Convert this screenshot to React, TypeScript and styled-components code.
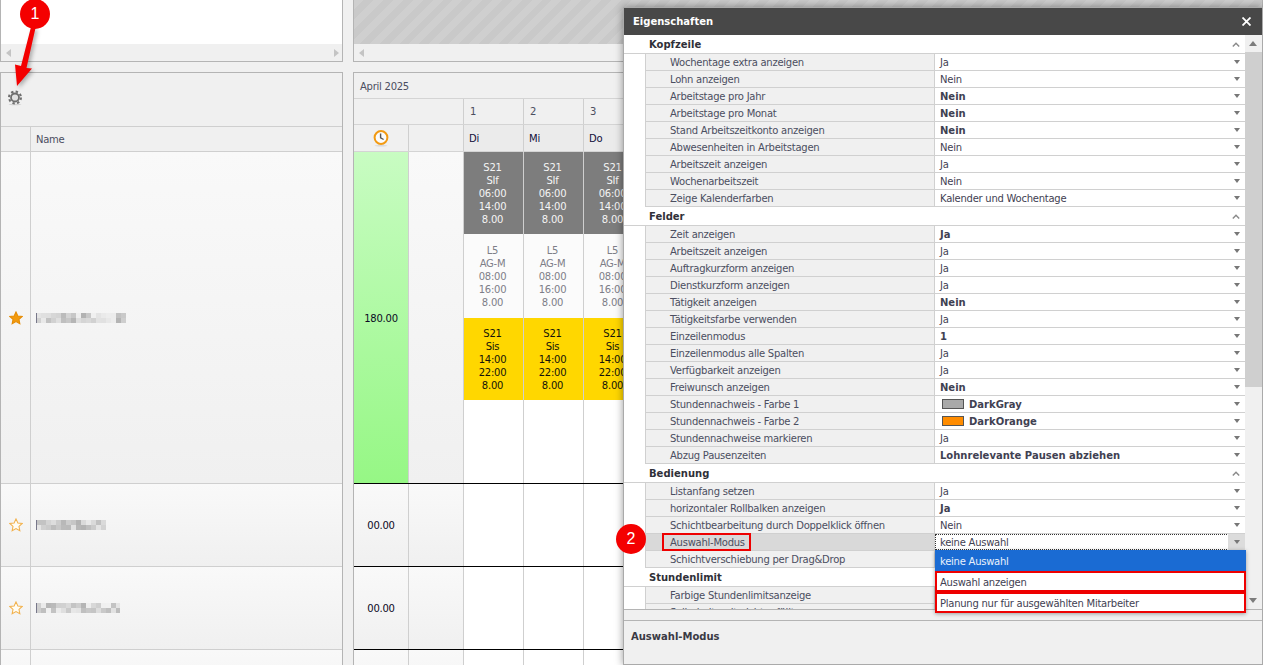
import React from 'react';
import styled, { createGlobalStyle } from 'styled-components';

const Global = createGlobalStyle`
  * {
    box-sizing: border-box;
  }
  html, body {
    margin: 0;
    overflow: hidden;
  }
  body {
    font-family: "DejaVu Sans", "Liberation Sans", sans-serif;
    font-size: 10px;
    letter-spacing: -0.25px;
    color: #4b4e60;
  }
`;

const Page = styled.div`
  position: relative;
  width: 1263px;
  height: 665px;
  overflow: hidden;
  background: #f0f0f0;
  display: grid;
  grid-template-columns: 343px 1fr;
  grid-template-rows: 62px 1fr;
  column-gap: 10px;
  row-gap: 10px;
`;

const TopPanel = styled.div`
  border: 1px solid #b4b4b4;
  border-top: 0;
  display: flex;
  flex-direction: column;
  min-width: 0;
`;

const TopFill = styled.div<{ $hatched?: boolean }>`
  flex: 1;
  background: ${p =>
    p.$hatched
      ? 'repeating-linear-gradient(135deg, #cfcfcf 0 7px, #c9c9c9 7px 14px)'
      : '#fff'};
`;

const HScroll = styled.div`
  height: 17px;
  padding: 0 3px 0 5px;
  display: flex;
  align-items: center;
  justify-content: space-between;
`;

const ScrollArrow = styled.span<{ $right?: boolean }>`
  width: 0;
  height: 0;
  border-top: 4px solid transparent;
  border-bottom: 4px solid transparent;
  ${p =>
    p.$right ? 'border-left: 5px solid #c4c4c4;' : 'border-right: 5px solid #c4c4c4;'}
`;

const GridPanel = styled.div`
  border: 1px solid #b4b4b4;
  border-bottom: 0;
  overflow: hidden;
  min-width: 0;
`;

const ToolHeader = styled.div`
  height: 54px;
  border-bottom: 1px solid #cfcfcf;
  padding: 0 0 3px 6px;
  display: flex;
  align-items: center;
`;

const NameRow = styled.div<{ $h: number; $head?: boolean }>`
  height: ${p => p.$h}px;
  border-bottom: 1px solid #cfcfcf;
  display: flex;
  background: ${p =>
    p.$head ? '#f0f0f0' : 'linear-gradient(#f9f9f9, #f0f0f0)'};
`;

const StarCell = styled.div`
  width: 30px;
  border-right: 1px solid #cfcfcf;
  display: flex;
  align-items: center;
  justify-content: center;
`;

const NameCell = styled.div`
  flex: 1;
  padding-left: 5px;
  display: flex;
  align-items: center;
`;

const TitleRow = styled.div`
  height: 26px;
  border-bottom: 1px solid #d4d4d4;
  padding: 1px 0 0 6px;
  display: flex;
  align-items: center;
`;

const Row = styled.div<{ $h: number; $line?: string }>`
  height: ${p => p.$h}px;
  display: flex;
  width: max-content;
  border-bottom: 1px solid ${p => p.$line ?? '#d4d4d4'};
`;

const Cell = styled.div<{ $w: number; $bg?: string; $center?: boolean }>`
  width: ${p => p.$w}px;
  border-right: 1px solid #cfcfcf;
  background: ${p => p.$bg ?? 'transparent'};
  display: flex;
  align-items: center;
  justify-content: ${p => (p.$center ? 'center' : 'flex-start')};
  padding-left: ${p => (p.$center ? 0 : 6)}px;
`;

const DayName = styled(Cell)`
  color: #10103a;
  padding-left: 5px;
`;

const Hours = styled(Cell)<{ $total?: boolean }>`
  color: #0a0a24;
  padding-top: ${p => (p.$total ? 2 : 0)}px;
`;

const DayColumn = styled.div`
  width: 60px;
  border-right: 1px solid #cfcfcf;
  background: #fff;
  display: flex;
  flex-direction: column;
`;

const Shift = styled.div<{ $h: number; $bg: string; $fg: string }>`
  height: ${p => p.$h}px;
  background: ${p => p.$bg};
  color: ${p => p.$fg};
  padding-right: 2px;
  display: flex;
  flex-direction: column;
  align-items: center;
  justify-content: center;
  line-height: 13px;
`;

const Dialog = styled.div`
  position: absolute;
  left: 623px;
  top: 7px;
  width: 640px;
  height: 658px;
  border: 1px solid #aaa;
  background: #f0f0f0;
  box-shadow: 0 0 8px rgba(0, 0, 0, 0.4);
  display: flex;
  flex-direction: column;
`;

const DialogTitle = styled.div`
  height: 27px;
  flex: none;
  background: #484848;
  color: #fff;
  font-weight: bold;
  letter-spacing: 0;
  padding: 0 11px 0 9px;
  display: flex;
  align-items: center;
  justify-content: space-between;
`;

const CloseIcon = styled.svg`
  width: 9px;
  height: 9px;
  stroke: #fff;
  stroke-width: 1.8;
`;

const DialogBody = styled.div`
  height: 575px;
  flex: none;
  display: flex;
  border-bottom: 1px solid #b4b4b4;
`;

const PropertyList = styled.div`
  flex: 1;
  overflow: hidden;
  background: #fff;
`;

const SectionHead = styled.div`
  height: 19px;
  padding: 0 5px 0 25px;
  border-bottom: 1px solid #d0d0d0;
  display: flex;
  align-items: center;
  justify-content: space-between;
  color: #2f3038;
  font-weight: bold;
  letter-spacing: 0;
`;

const Caret = styled.svg`
  width: 8px;
  height: 5px;
  fill: none;
  stroke: #8a8a8a;
  stroke-width: 1.4;
`;

const PropRow = styled.div`
  height: 17px;
  margin-left: 21px;
  border-left: 1px solid #d0d0d0;
  border-bottom: 1px solid #d0d0d0;
  display: flex;
`;

const PropLabel = styled.div<{ $active?: boolean }>`
  width: 289px;
  padding-left: 24px;
  background: ${p => (p.$active ? '#d9d9d9' : '#f0f0f0')};
  border-right: 1px solid #d0d0d0;
  display: flex;
  align-items: center;
`;

const MarkedText = styled.span<{ $marked?: boolean }>`
  position: relative;
  ${p =>
    p.$marked &&
    `&::after {
      content: '';
      position: absolute;
      left: -8px;
      right: -6px;
      top: -4px;
      bottom: -3px;
      border: 2px solid #ee0000;
    }`}
`;

const PropValue = styled.div<{ $bold?: boolean; $focus?: boolean }>`
  flex: 1;
  position: relative;
  padding-left: 5px;
  display: flex;
  align-items: center;
  gap: 5px;
  font-weight: ${p => (p.$bold ? 'bold' : 'normal')};
  letter-spacing: ${p => (p.$bold ? '0' : '-0.25px')};
  color: #3f4152;
  ${p => p.$focus && 'outline: 1px dotted #333; outline-offset: -1px;'}
`;

const Swatch = styled.span<{ $color: string }>`
  width: 22px;
  height: 10px;
  margin-left: 2px;
  border: 1px solid #555;
  background: ${p => p.$color};
`;

const DropButton = styled.span<{ $active?: boolean }>`
  position: absolute;
  right: 0;
  top: 0;
  bottom: 0;
  width: 17px;
  background: ${p => (p.$active ? '#dcdcdc' : 'transparent')};
  display: flex;
  align-items: center;
  justify-content: center;
  &::before {
    content: '';
    border-left: 3.5px solid transparent;
    border-right: 3.5px solid transparent;
    border-top: 4px solid #777;
  }
`;

const VScroll = styled.div`
  position: relative;
  width: 17px;
  flex: none;
  background: #f0f0f0;
  padding-top: 17px;
`;

const Thumb = styled.div`
  height: 335px;
  background: #cfcfcf;
`;

const VArrow = styled.span<{ $down?: boolean }>`
  position: absolute;
  left: 4px;
  ${p => (p.$down ? 'bottom: 6px;' : 'top: 6px;')}
  border-left: 4px solid transparent;
  border-right: 4px solid transparent;
  ${p =>
    p.$down ? 'border-top: 5px solid #7c7c7c;' : 'border-bottom: 5px solid #7c7c7c;'}
`;

const Strip = styled.div`
  height: 11px;
  flex: none;
  border-bottom: 1px solid #b4b4b4;
`;

const Description = styled.div`
  flex: 1;
  padding: 10px 7px;
  font-weight: bold;
  letter-spacing: 0;
  color: #3a3a44;
`;

const Dropdown = styled.div`
  position: absolute;
  left: 311px;
  top: 542px;
  width: 311px;
  background: #fff;
  box-shadow: 0 1px 4px rgba(0, 0, 0, 0.35);
`;

const Option = styled.div<{ $selected?: boolean; $marked?: boolean }>`
  height: 21px;
  padding: 2px 0 0 5px;
  display: flex;
  align-items: center;
  background: ${p => (p.$selected ? '#1a6bd3' : '#fff')};
  color: ${p => (p.$selected ? '#e9f1fb' : '#3f4152')};
  ${p => p.$marked && 'border: 2px solid #ee0000; padding: 1px 0 0 3px;'}
`;

const Badge = styled.div<{ $x: number; $y: number }>`
  position: absolute;
  left: ${p => p.$x - 15}px;
  top: ${p => p.$y - 15}px;
  width: 30px;
  height: 30px;
  border-radius: 50%;
  background: #f40000;
  color: #fff;
  font: 16px "Liberation Sans", sans-serif;
  letter-spacing: 0;
  display: flex;
  align-items: center;
  justify-content: center;
`;

const ArrowOverlay = styled.svg`
  position: absolute;
  left: 0;
  top: 0;
  width: 60px;
  height: 100px;
  filter: drop-shadow(2px 2px 2px rgba(0, 0, 0, 0.3));
`;

const Star = ({ filled }: { filled?: boolean }) => (
  <svg width="14" height="14" viewBox="0 0 24 24">
    <path
      d="M12 1.5l3.2 6.9 7.5.9-5.6 5.1 1.5 7.4L12 18.1l-6.6 3.7 1.5-7.4-5.6-5.1 7.5-.9z"
      fill={filled ? '#f29a0e' : '#fffdf5'}
      stroke={filled ? '#e58c05' : '#f2b14c'}
      strokeWidth="1.8"
    />
  </svg>
);

const Gear = () => (
  <svg width="16" height="16" viewBox="0 0 16 16">
    <ellipse cx="8" cy="14.5" rx="6.5" ry="0.8" fill="#d2d2d2" />
    <circle cx="8" cy="7.500" r="6" fill="none" stroke="#6e6e6e" strokeWidth="2" strokeDasharray="2.4 2.3" />
    <circle cx="8" cy="7.500" r="4" fill="#e2e2e2" stroke="#6e6e6e" strokeWidth="1.800" />
  </svg>
);

const Clock = () => (
  <svg width="18" height="18" viewBox="0 0 18 18">
    <ellipse cx="9" cy="16.700" rx="6.500" ry="0.800" fill="#d8d8d8" />
    <circle cx="9" cy="8.500" r="6.400" fill="#fbfbfb" stroke="#f29a12" strokeWidth="2" />
    <path d="M8.600 4.500v4.400l3 1.600" fill="none" stroke="#555" strokeWidth="1.400" />
  </svg>
);

// pixelated names from the screenshot
const Mosaic = ({ width, seed }: { width: number; seed: number }) => {
  const cols = Math.ceil(width / 5);
  const cells: React.ReactNode[] = [];
  for (let c = 0; c < cols; c++) {
    for (let r = 0; r < 2; r++) {
      const x = Math.sin(seed * 12.9 + c * 78.2 + r * 37.7) * 43758.5;
      const v = Math.round(176 + (x - Math.floor(x)) * 66);
      cells.push(
        <rect
          key={`${c}-${r}`}
          x={c * 5}
          y={r * 5}
          width="5"
          height="5"
          fill={`rgb(${v},${v},${v})`}
        />
      );
    }
  }
  return (
    <svg width={width} height="10">
      {cells}
      <rect width="1" height="10" fill="#77778a" />
    </svg>
  );
};

type Prop = {
  label: string;
  value?: string;
  bold?: boolean;
  swatch?: string;
  active?: boolean;
};

const sections: { title: string; props: Prop[] }[] = [
  {
    title: 'Kopfzeile',
    props: [
      { label: 'Wochentage extra anzeigen', value: 'Ja' },
      { label: 'Lohn anzeigen', value: 'Nein' },
      { label: 'Arbeitstage pro Jahr', value: 'Nein', bold: true },
      { label: 'Arbeitstage pro Monat', value: 'Nein', bold: true },
      { label: 'Stand Arbeitszeitkonto anzeigen', value: 'Nein', bold: true },
      { label: 'Abwesenheiten in Arbeitstagen', value: 'Nein' },
      { label: 'Arbeitszeit anzeigen', value: 'Ja' },
      { label: 'Wochenarbeitszeit', value: 'Nein' },
      { label: 'Zeige Kalenderfarben', value: 'Kalender und Wochentage' },
    ],
  },
  {
    title: 'Felder',
    props: [
      { label: 'Zeit anzeigen', value: 'Ja', bold: true },
      { label: 'Arbeitszeit anzeigen', value: 'Ja' },
      { label: 'Auftragkurzform anzeigen', value: 'Ja' },
      { label: 'Dienstkurzform anzeigen', value: 'Ja' },
      { label: 'Tätigkeit anzeigen', value: 'Nein', bold: true },
      { label: 'Tätigkeitsfarbe verwenden', value: 'Ja' },
      { label: 'Einzeilenmodus', value: '1', bold: true },
      { label: 'Einzeilenmodus alle Spalten', value: 'Ja' },
      { label: 'Verfügbarkeit anzeigen', value: 'Ja' },
      { label: 'Freiwunsch anzeigen', value: 'Nein', bold: true },
      { label: 'Stundennachweis - Farbe 1', value: 'DarkGray', bold: true, swatch: '#a9a9a9' },
      { label: 'Stundennachweis - Farbe 2', value: 'DarkOrange', bold: true, swatch: '#ff8c00' },
      { label: 'Stundennachweise markieren', value: 'Ja' },
      { label: 'Abzug Pausenzeiten', value: 'Lohnrelevante Pausen abziehen', bold: true },
    ],
  },
  {
    title: 'Bedienung',
    props: [
      { label: 'Listanfang setzen', value: 'Ja' },
      { label: 'horizontaler Rollbalken anzeigen', value: 'Ja', bold: true },
      { label: 'Schichtbearbeitung durch Doppelklick öffnen', value: 'Nein' },
      { label: 'Auswahl-Modus', value: 'keine Auswahl', active: true },
      { label: 'Schichtverschiebung per Drag&Drop' },
    ],
  },
  {
    title: 'Stundenlimit',
    props: [
      { label: 'Farbige Stundenlimitsanzeige' },
      { label: 'Sollarbeitszeit nicht erfüllt' },
    ],
  },
];

const days = [
  { day: '1', name: 'Di' },
  { day: '2', name: 'Mi' },
  { day: '3', name: 'Do' },
];

const shifts = [
  { h: 82, bg: '#7d7d7d', fg: '#f4f4f4', lines: ['S21', 'SIf', '06:00', '14:00', '8.00'] },
  { h: 84, bg: '#fbfbfb', fg: '#7e7e88', lines: ['L5', 'AG-M', '08:00', '16:00', '8.00'] },
  { h: 82, bg: '#ffd700', fg: '#14140a', lines: ['S21', 'Sis', '14:00', '22:00', '8.00'] },
];

const people = [
  { h: 332, filled: true, width: 90, seed: 1 },
  { h: 83, width: 70, seed: 2 },
  { h: 83, width: 84, seed: 3 },
  { h: 83 },
];

export default function App() {
  return (
    <Page>
      <Global />
      <TopPanel>
        <TopFill />
        <HScroll>
          <ScrollArrow />
          <ScrollArrow $right />
        </HScroll>
      </TopPanel>
      <TopPanel>
        <TopFill $hatched />
        <HScroll>
          <ScrollArrow />
        </HScroll>
      </TopPanel>

      <GridPanel>
        <ToolHeader>
          <Gear />
        </ToolHeader>
        <NameRow $h={25} $head>
          <StarCell />
          <NameCell>Name</NameCell>
        </NameRow>
        {people.map((p, i) => (
          <NameRow key={i} $h={p.h}>
            <StarCell>{p.width && <Star filled={p.filled} />}</StarCell>
            <NameCell>{p.width && <Mosaic width={p.width} seed={p.seed} />}</NameCell>
          </NameRow>
        ))}
      </GridPanel>

      <GridPanel>
        <TitleRow>April 2025</TitleRow>
        <Row $h={26}>
          <Cell $w={110} />
          {days.map(d => (
            <Cell key={d.day} $w={60}>
              {d.day}
            </Cell>
          ))}
        </Row>
        <Row $h={27}>
          <Cell $w={55} $center>
            <Clock />
          </Cell>
          <Cell $w={55} />
          {days.map(d => (
            <DayName key={d.day} $w={60} $bg="#ebebeb">
              {d.name}
            </DayName>
          ))}
        </Row>
        <Row $h={332} $line="#000">
          <Hours $w={55} $center $total $bg="linear-gradient(#c8fcc2, #96f785)">
            180.00
          </Hours>
          <Cell $w={55} $bg="linear-gradient(#f9f9f9, #f0f0f0)" />
          {days.map(d => (
            <DayColumn key={d.day}>
              {shifts.map((s, i) => (
                <Shift key={i} $h={s.h} $bg={s.bg} $fg={s.fg}>
                  {s.lines.map((l, j) => (
                    <span key={j}>{l}</span>
                  ))}
                </Shift>
              ))}
            </DayColumn>
          ))}
        </Row>
        {[0, 1, 2].map(i => (
          <Row key={i} $h={83} $line="#000">
            <Hours $w={55} $center $bg="linear-gradient(#f9f9f9, #f0f0f0)">
              {i < 2 ? '00.00' : ''}
            </Hours>
            <Cell $w={55} $bg="linear-gradient(#f9f9f9, #f0f0f0)" />
            {days.map(d => (
              <DayColumn key={d.day} />
            ))}
          </Row>
        ))}
      </GridPanel>

      <Dialog>
        <DialogTitle>
          Eigenschaften
          <CloseIcon viewBox="0 0 9 9">
            <path d="M.5.5l8 8M8.5.5l-8 8" />
          </CloseIcon>
        </DialogTitle>
        <DialogBody>
          <PropertyList>
            {sections.map(s => (
              <React.Fragment key={s.title}>
                <SectionHead>
                  {s.title}
                  <Caret viewBox="0 0 8 5">
                    <path d="M.8 4.5L4 1.2l3.2 3.3" />
                  </Caret>
                </SectionHead>
                {s.props.map(p => (
                  <PropRow key={p.label}>
                    <PropLabel $active={p.active}>
                      <MarkedText $marked={p.active}>{p.label}</MarkedText>
                    </PropLabel>
                    <PropValue $bold={p.bold} $focus={p.active}>
                      {p.swatch && <Swatch $color={p.swatch} />}
                      {p.value}
                      {p.value && <DropButton $active={p.active} />}
                    </PropValue>
                  </PropRow>
                ))}
              </React.Fragment>
            ))}
          </PropertyList>
          <VScroll>
            <VArrow />
            <Thumb />
            <VArrow $down />
          </VScroll>
        </DialogBody>
        <Strip />
        <Description>Auswahl-Modus</Description>
        <Dropdown>
          <Option $selected>keine Auswahl</Option>
          <Option $marked>Auswahl anzeigen</Option>
          <Option $marked>Planung nur für ausgewählten Mitarbeiter</Option>
        </Dropdown>
      </Dialog>

      <ArrowOverlay viewBox="0 0 60 100">
        <path d="M31 27l4.500 1-9 40 5.500.6L17 86 15 64.500l6 1.500z" fill="#f40000" />
      </ArrowOverlay>
      <Badge $x={35} $y={14}>1</Badge>
      <Badge $x={631} $y={539}>2</Badge>
    </Page>
  );
}
